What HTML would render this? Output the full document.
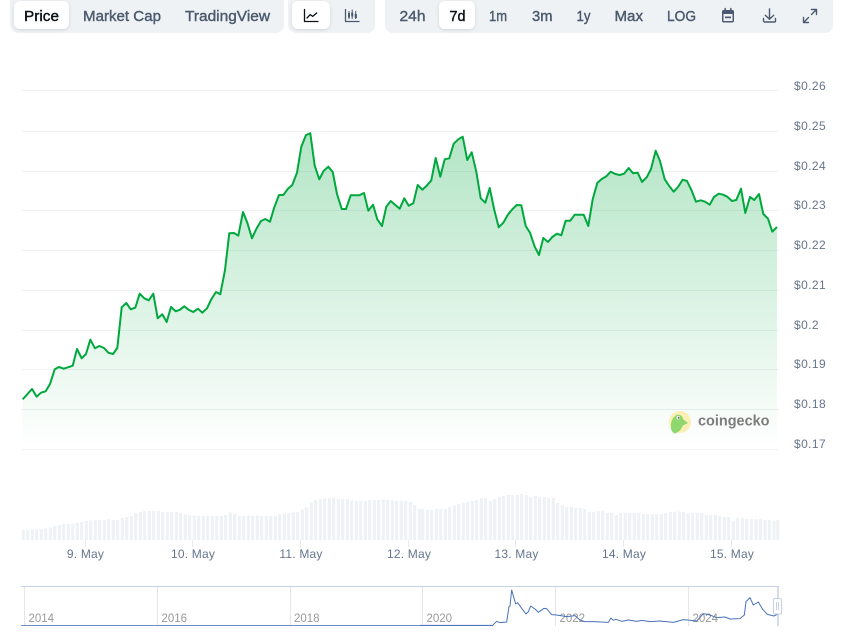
<!DOCTYPE html>
<html lang="en"><head><meta charset="utf-8"><title>Chart</title>
<style>
html,body{margin:0;padding:0;background:#fff;width:843px;height:642px;overflow:hidden}
svg{display:block}
text{font-family:"Liberation Sans",sans-serif}
.t{font-size:14.5px;font-weight:400;fill:#4b5a6e;stroke:#4b5a6e;stroke-width:.4px}
.a{fill:#0d1217;stroke:#0d1217}
.y{font-size:12px;fill:#66758c;letter-spacing:.4px}
.x{font-size:12px;fill:#66758c;text-anchor:middle;letter-spacing:.2px}
.n{font-size:11.5px;fill:#999}
</style></head><body>
<svg width="843" height="642" viewBox="0 0 843 642" xmlns="http://www.w3.org/2000/svg">
<defs>
<linearGradient id="g" gradientUnits="userSpaceOnUse" x1="0" y1="133" x2="0" y2="449">
<stop offset="0" stop-color="#00a83e" stop-opacity=".3"/>
<stop offset="1" stop-color="#00a83e" stop-opacity="0"/>
</linearGradient>
<filter id="s" x="-20%" y="-20%" width="140%" height="150%"><feDropShadow dx="0" dy="1" stdDeviation="1.5" flood-color="#0d1217" flood-opacity=".13"/></filter>
</defs>

<!-- toolbar groups -->
<rect x="10" y="-8" width="274" height="41" rx="8" fill="#eff2f5"/>
<rect x="288" y="-8" width="87" height="41" rx="8" fill="#eff2f5"/>
<rect x="385" y="-8" width="448" height="41" rx="8" fill="#eff2f5"/>
<rect x="14" y="1" width="55" height="28" rx="6" fill="#fff" filter="url(#s)"/>
<rect x="292" y="1" width="38" height="28" rx="6" fill="#fff" filter="url(#s)"/>
<rect x="439" y="1" width="36" height="28" rx="6" fill="#fff" filter="url(#s)"/>

<text class="t a" x="24" y="21" textLength="35" lengthAdjust="spacingAndGlyphs">Price</text>
<text class="t" x="83" y="21" textLength="78" lengthAdjust="spacingAndGlyphs">Market Cap</text>
<text class="t" x="185" y="21" textLength="85" lengthAdjust="spacingAndGlyphs">TradingView</text>
<text class="t" x="399.500" y="21" textLength="26" lengthAdjust="spacingAndGlyphs">24h</text>
<text class="t a" x="449.500" y="21" textLength="16" lengthAdjust="spacingAndGlyphs">7d</text>
<text class="t" x="489" y="21" textLength="18" lengthAdjust="spacingAndGlyphs">1m</text>
<text class="t" x="532" y="21" textLength="20.500" lengthAdjust="spacingAndGlyphs">3m</text>
<text class="t" x="576.500" y="21" textLength="14" lengthAdjust="spacingAndGlyphs">1y</text>
<text class="t" x="614.500" y="21" textLength="28.500" lengthAdjust="spacingAndGlyphs">Max</text>
<text class="t" x="667" y="21" textLength="29" lengthAdjust="spacingAndGlyphs">LOG</text>

<!-- line-chart icon -->
<path d="M304.500 9.500V21.500H318M307 18l3.300-3.400 2.400 1.800 4-3.400" fill="none" stroke="#0d1217" stroke-width="1.300" stroke-linecap="round" stroke-linejoin="round"/>
<!-- candle icon -->
<path d="M345.500 9.500V21.500H359" fill="none" stroke="#4b5a6e" stroke-width="1.300" stroke-linecap="round" stroke-linejoin="round"/>
<path d="M349 11v8M352.200 9.500v9.500M355.700 11v8" fill="none" stroke="#4b5a6e" stroke-width="1"/>
<path d="M348 13h2v4.500h-2zM351.200 12.500h2v4h-2zM354.700 14h2.200v4h-2.200z" fill="#4b5a6e"/>
<!-- calendar icon -->
<path d="M725.200 8.500v2.500M730.800 8.500v2.500" stroke="#4b5a6e" stroke-width="1.500" stroke-linecap="round"/>
<rect x="722" y="10" width="12" height="12.500" rx="1.700" fill="#4b5a6e"/>
<rect x="723.500" y="14" width="9" height="7" fill="#eff2f5"/>
<rect x="725" y="16.500" width="6" height="1.700" fill="#4b5a6e"/>
<!-- download icon -->
<path d="M769.500 9v10M765.300 15.200l4.200 4 4.200-4M763.500 18.500v2.200a1.300 1.300 0 0 0 1.300 1.300h9.400a1.300 1.300 0 0 0 1.300-1.300v-2.200" fill="none" stroke="#4b5a6e" stroke-width="1.400" stroke-linecap="round" stroke-linejoin="round"/>
<!-- expand icon -->
<path d="M811.500 9.500h5v5M816.500 9.500l-5 5M808.500 17.500l-5 5M803.500 17.500v5h5" fill="none" stroke="#4b5a6e" stroke-width="1.400" stroke-linecap="round" stroke-linejoin="round"/>

<!-- grid -->
<path d="M21 90.500H779M21 131.500H779M21 171.500H779M21 210.500H779M21 250.500H779M21 290.500H779M21 330.500H779M21 369.500H779M21 409.500H779M21 449.500H779" stroke="#eff2f5" stroke-width="1" fill="none"/>

<!-- area -->
<path fill="url(#g)" d="M22.700 399.300L32 389L36.700 396.700L41 392.700L45.700 391.300L50 384L54.700 369.300L59 367L63.700 368.700L68 367.300L72.700 365.700L77 349L81.700 358.300L86 354L90.300 339.700L95 348.300L99.300 346L104 348L108.300 352.700L113 354L117.300 348L121.700 307.300L126.300 303L130.700 309.300L135.300 307.700L139.700 293.700L144.300 298.300L148.700 300.300L153.300 293.700L157.700 318.300L162.300 314.300L166.700 322L171 307L175.700 311.300L180 309.700L184.300 306.300L189 310L193.300 312L198 308.700L202.300 312.700L207 308.300L211.300 299.300L216 292L220.300 294.300L225 270L229.300 233.300L234 233L238.300 235.700L243 212L247.300 222.700L252 238.300L256.300 229L261 221L265.300 219L270 221.700L274.300 207.300L279 195L283.300 195L288 188.700L292.300 185L297 172.700L301.300 146.700L306 135L310.300 133.300L314.700 165.700L319.300 179.300L323.700 170.700L328.300 166.700L332.700 172L337 194L341.700 209L346 209L350.700 195.300L355 195.300L359.300 195.300L364 193L368.300 210.700L373 204.700L377.300 219.300L382 226L386.300 206.700L390.700 201L395.300 205L399.700 208.700L404.300 198.300L408.700 205.700L413.300 203.300L417.700 185L422.300 189.700L426.700 185.700L431.300 180.300L435.700 158L440.300 176.700L444.700 159.300L449.300 158.300L453.700 143.700L458.300 139.300L462.700 136.700L467.300 160L471.700 152.300L476.300 171.700L480.700 198.300L485.300 202.700L489.700 188L494.300 210L498.700 227.300L503.300 222.700L507.700 215L512.300 209.300L516.700 205L521.300 205.300L525.700 226L530 232.700L534.700 246.700L539 255L543.300 238L548 242L552.300 237L557 233.700L561.300 235.300L565.700 220.700L570.300 220.700L574.700 214.700L579.300 214.700L583.700 214.700L588.300 226L592.700 199.300L597.300 183L601.700 179L606.300 176.300L610.700 171.700L615.300 174L619.700 175L624 173.700L628.700 168L633 173.300L637.700 172.700L642 182L646.700 177.300L651 169L655.700 150.700L660 161L664.700 179.300L669 185.700L673.700 191.700L678 187L682.700 179.700L687 181L691.700 190.700L696 201.700L700.700 200.300L705 201.700L709.700 204.700L714 197L718.700 193.700L723 194.700L727.300 196.700L732 201L736.300 200L741 188.700L745.300 213L750 197L754.300 200L759 194L763.300 214L768 218.700L772.300 231.700L777 227L777 449L22.700 449Z"/>
<!-- line -->
<path fill="none" stroke="#00a83e" stroke-width="2" stroke-linejoin="round" d="M22.700 399.300L32 389L36.700 396.700L41 392.700L45.700 391.300L50 384L54.700 369.300L59 367L63.700 368.700L68 367.300L72.700 365.700L77 349L81.700 358.300L86 354L90.300 339.700L95 348.300L99.300 346L104 348L108.300 352.700L113 354L117.300 348L121.700 307.300L126.300 303L130.700 309.300L135.300 307.700L139.700 293.700L144.300 298.300L148.700 300.300L153.300 293.700L157.700 318.300L162.300 314.300L166.700 322L171 307L175.700 311.300L180 309.700L184.300 306.300L189 310L193.300 312L198 308.700L202.300 312.700L207 308.300L211.300 299.300L216 292L220.300 294.300L225 270L229.300 233.300L234 233L238.300 235.700L243 212L247.300 222.700L252 238.300L256.300 229L261 221L265.300 219L270 221.700L274.300 207.300L279 195L283.300 195L288 188.700L292.300 185L297 172.700L301.300 146.700L306 135L310.300 133.300L314.700 165.700L319.300 179.300L323.700 170.700L328.300 166.700L332.700 172L337 194L341.700 209L346 209L350.700 195.300L355 195.300L359.300 195.300L364 193L368.300 210.700L373 204.700L377.300 219.300L382 226L386.300 206.700L390.700 201L395.300 205L399.700 208.700L404.300 198.300L408.700 205.700L413.300 203.300L417.700 185L422.300 189.700L426.700 185.700L431.300 180.300L435.700 158L440.300 176.700L444.700 159.300L449.300 158.300L453.700 143.700L458.300 139.300L462.700 136.700L467.300 160L471.700 152.300L476.300 171.700L480.700 198.300L485.300 202.700L489.700 188L494.300 210L498.700 227.300L503.300 222.700L507.700 215L512.300 209.300L516.700 205L521.300 205.300L525.700 226L530 232.700L534.700 246.700L539 255L543.300 238L548 242L552.300 237L557 233.700L561.300 235.300L565.700 220.700L570.300 220.700L574.700 214.700L579.300 214.700L583.700 214.700L588.300 226L592.700 199.300L597.300 183L601.700 179L606.300 176.300L610.700 171.700L615.300 174L619.700 175L624 173.700L628.700 168L633 173.300L637.700 172.700L642 182L646.700 177.300L651 169L655.700 150.700L660 161L664.700 179.300L669 185.700L673.700 191.700L678 187L682.700 179.700L687 181L691.700 190.700L696 201.700L700.700 200.300L705 201.700L709.700 204.700L714 197L718.700 193.700L723 194.700L727.300 196.700L732 201L736.300 200L741 188.700L745.300 213L750 197L754.300 200L759 194L763.300 214L768 218.700L772.300 231.700L777 227"/>

<!-- y labels -->
<text class="y" x="794" y="90">$0.26</text>
<text class="y" x="794" y="130">$0.25</text>
<text class="y" x="794" y="170">$0.24</text>
<text class="y" x="794" y="209">$0.23</text>
<text class="y" x="794" y="249">$0.22</text>
<text class="y" x="794" y="289">$0.21</text>
<text class="y" x="794" y="329">$0.2</text>
<text class="y" x="794" y="368">$0.19</text>
<text class="y" x="794" y="408">$0.18</text>
<text class="y" x="794" y="448">$0.17</text>

<!-- watermark -->
<circle cx="680" cy="422" r="11" fill="#fbefb4"/>
<path d="M671 428.500c-.5-5 .5-9.500 4-12.500 2.500-2 6-1.500 7.500 1l.8 2.500 4.700 3.500-5 2.500-3 5-4.500 3c-2 0-4-2-4.500-5z" fill="#8fd86e"/>
<circle cx="678.300" cy="417.700" r="1.700" fill="#fff"/><circle cx="678.600" cy="417.700" r="1" fill="#6a6a6a"/>
<text x="698" y="425.500" font-size="14.500" font-weight="700" fill="#7c7c7c" textLength="71.500" lengthAdjust="spacingAndGlyphs">coingecko</text>

<!-- volume -->
<g transform="translate(0 480) scale(.33333)" fill="none" stroke="#eff2f5" stroke-width="9.500">
<path d="M70 150V180M83 150V180M97 148V180M110 148V180M124 148V180M137 145V180M151 142V180M164 138V180M178 135V180M191 132V180M205 132V180M218 132V180M232 128V180M245 126V180M259 123V180M272 121V180M286 120V180M299 120V180M313 120V180M326 117V180M340 120V180M353 120V180M367 114V180M380 111V180M394 108V180M407 99V180M421 96V180M434 93V180M448 93V180M461 93V180M475 93V180M488 96V180M502 96V180M515 96V180M529 96V180M542 99V180M556 103V180M569 105V180M583 106V180M596 108V180M610 108V180M623 108V180M637 108V180M650 108V180M664 108V180M677 105V180M691 97V180M704 102V180M718 108V180M731 108V180M745 106V180M758 108V180M772 106V180M785 108V180M799 108V180M812 108V180M826 108V180M839 102V180M853 100V180M866 99V180M880 97V180M893 96V180M907 88V180M920 82V180M934 67V180M947 60V180M961 57V180M974 55V180M988 54V180M1001 52V180M1015 57V180M1028 57V180M1042 57V180M1055 61V180M1069 63V180M1082 63V180M1096 63V180M1109 60V180M1123 60V180M1136 60V180M1150 58V180M1163 60V180M1177 61V180M1190 63V180M1204 63V180M1217 63V180M1231 66V180M1244 75V180M1258 87V180"/>
</g>
<g transform="translate(420 480) scale(.33333)" fill="none" stroke="#eff2f5" stroke-width="9.500">
<path d="M8 87V180M22 90V180M35 90V180M49 87V180M62 87V180M76 87V180M89 81V180M103 76V180M116 72V180M130 69V180M143 66V180M157 63V180M170 60V180M184 54V180M197 54V180M211 63V180M224 57V180M238 51V180M251 48V180M265 45V180M278 45V180M292 45V180M305 42V180M319 45V180M332 51V180M346 48V180M359 51V180M373 51V180M386 54V180M400 54V180M413 69V180M427 75V180M440 81V180M454 81V180M467 84V180M481 84V180M494 87V180M508 96V180M521 96V180M535 93V180M548 93V180M562 99V180M575 99V180M589 105V180M602 99V180M616 99V180M629 99V180M643 99V180M656 99V180M670 102V180M683 102V180M697 102V180M710 102V180M724 102V180M737 99V180M751 96V180M764 96V180M778 94V180M791 96V180M805 99V180M818 99V180M832 99V180M845 99V180M859 105V180M872 105V180M886 105V180M899 108V180M913 111V180M926 111V180M940 123V180M953 114V180M967 114V180M980 117V180M994 117V180M1008 117V180M1021 117V180M1035 120V180M1048 120V180M1062 122V180M1073 120V180"/>
</g>

<!-- x ticks and labels -->
<path d="M85.500 540v7M192.500 540v7M300.500 540v7M408.500 540v7M515.500 540v7M623.500 540v7M731.500 540v7" stroke="#e6e9ee" stroke-width="1"/>
<text class="x" x="85.500" y="558">9. May</text>
<text class="x" x="193" y="558">10. May</text>
<text class="x" x="301" y="558">11. May</text>
<text class="x" x="409" y="558">12. May</text>
<text class="x" x="516.500" y="558">13. May</text>
<text class="x" x="624" y="558">14. May</text>
<text class="x" x="732" y="558">15. May</text>

<!-- navigator -->
<path d="M24.500 587v39M157.500 587v39M290.500 587v39M422.500 587v39M555.500 587v39M688.500 587v39" stroke="#e6e6e6" stroke-width="1"/>
<text class="n" x="28.500" y="622">2014</text>
<text class="n" x="161.500" y="622">2016</text>
<text class="n" x="294" y="622">2018</text>
<text class="n" x="426.500" y="622">2020</text>
<text class="n" x="559.500" y="622">2022</text>
<text class="n" x="692.500" y="622">2024</text>
<path d="M21 586.500H778" stroke="#c5d0e0" stroke-width="1"/>
<path d="M778 586v40" stroke="#c5d0e0" stroke-width="1.500"/>
<path d="M21 625.500H493" stroke="#6f8cc4" stroke-width="1"/>
<g transform="translate(420 480) scale(.33333)">
<path fill="none" stroke="#4a72b8" stroke-width="3" stroke-linejoin="round" d="M0 436L218 436L230 424L240 428L260 426L267 380L270 378L275 330L287 372L293 368L305 385L318 402L325 395L332 378L345 387L355 397L372 385L380 386L395 404L410 405L440 410L465 407L480 420L495 425L520 425L565 427L573 414L580 421L588 418L605 424L625 420L650 424L665 421L690 425L720 423L760 427L790 419L830 423L850 401L870 405L890 413L915 411L930 417L960 416L973 405L978 365L990 353L1000 375L1015 366L1028 388L1042 403L1050 405L1062 408L1072 403"/>
</g>
<rect x="773.500" y="598.500" width="8" height="15.500" rx="1.500" fill="#fff" stroke="#c5d0e0" stroke-width="1"/>
<path d="M776.500 602v8M778.500 602v8" stroke="#c5d0e0" stroke-width="1"/>
</svg>
</body></html>
